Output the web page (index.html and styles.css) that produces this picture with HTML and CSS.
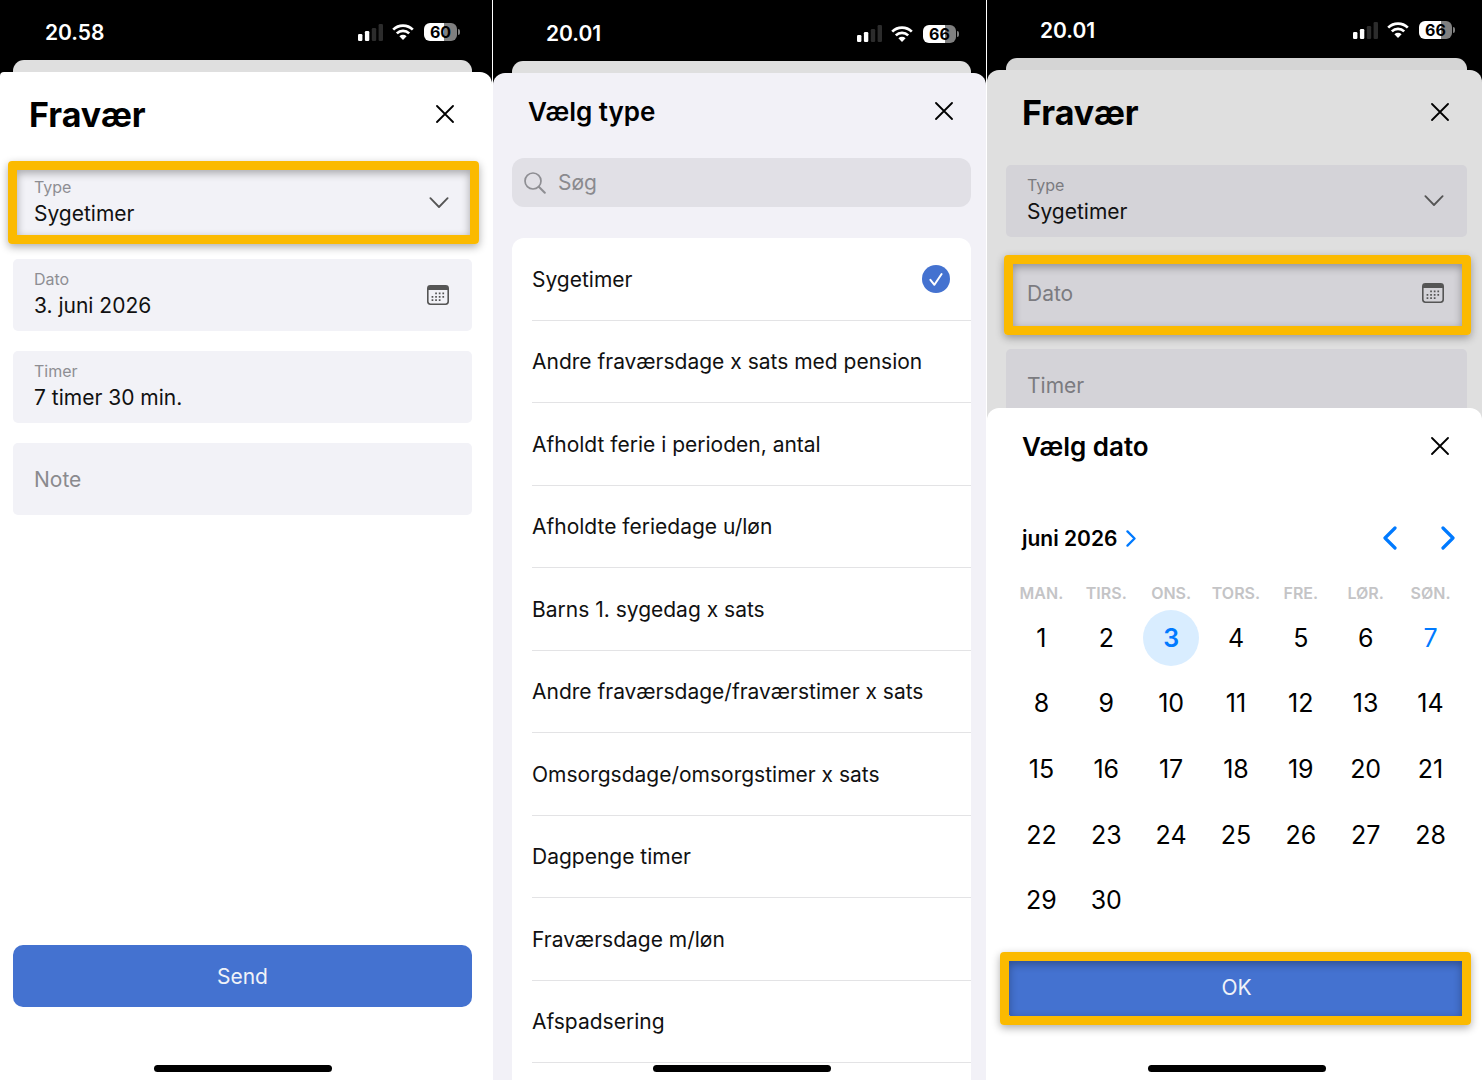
FILE: index.html
```
<!DOCTYPE html>
<html lang="da">
<head>
    <meta charset="UTF-8">
    <meta name="viewport" content="width=device-width, initial-scale=1.0">
    <title>Fravær</title>
    <link rel="stylesheet" href="styles.css">
</head>
<body>
    <!-- Shared icons -->
    <svg class="icon-defs" aria-hidden="true">
        <symbol id="signal" viewBox="0 0 25 17">
            <rect x="0" y="10" width="4.4" height="7" rx="1.2" fill="#fff"/>
            <rect x="6.9" y="7" width="4.4" height="10" rx="1.2" fill="#fff"/>
            <rect x="13.8" y="4" width="4.4" height="13" rx="1.2" fill="#2c2c2c"/>
            <rect x="20.6" y="0" width="4.4" height="17" rx="1.2" fill="#2c2c2c"/>
        </symbol>
        <symbol id="wifi" viewBox="0 0 22 16">
            <g fill="none" stroke="#fff" stroke-width="2.7">
                <path d="M1.2 5.6a14 14 0 0 1 19.6 0"/>
                <path d="M4.8 9.4a8.9 8.9 0 0 1 12.4 0"/>
            </g>
            <path d="M11 16l-3.6-3.7a5.2 5.2 0 0 1 7.2 0z" fill="#fff"/>
        </symbol>
        <symbol id="close" viewBox="0 0 18 18">
            <path d="M1 1l16 16M17 1L1 17" fill="none" stroke="#000" stroke-width="1.8" stroke-linecap="round"/>
        </symbol>
        <symbol id="chevron-down" viewBox="0 0 20 12">
            <path d="M1.4 1.2l8.6 8.8 8.6-8.8" fill="none" stroke="#555" stroke-width="1.8" stroke-linecap="round" stroke-linejoin="round"/>
        </symbol>
        <symbol id="chevron-right" viewBox="0 0 14 24">
            <path d="M2 2l10 10L2 22" fill="none" stroke="#007aff" stroke-width="3.2" stroke-linecap="round" stroke-linejoin="round"/>
        </symbol>
        <symbol id="chevron-left" viewBox="0 0 14 24">
            <path d="M12 2L2 12l10 10" fill="none" stroke="#007aff" stroke-width="3.2" stroke-linecap="round" stroke-linejoin="round"/>
        </symbol>
        <symbol id="calendar" viewBox="0 0 22 20">
            <rect x=".8" y=".8" width="20.4" height="18.4" rx="2.6" fill="none" stroke="#555" stroke-width="1.6"/>
            <path d="M1 5V3a2 2 0 0 1 2-2h16a2 2 0 0 1 2 2v2z" fill="#555"/>
            <g fill="none" stroke="#555" stroke-width="1.7" stroke-dasharray="1.7 1.9">
                <path d="M8.2 8.4h9"/>
                <path d="M4.6 11.8h12.6"/>
                <path d="M4.6 15.2h9"/>
            </g>
        </symbol>
        <symbol id="search" viewBox="0 0 22 22">
            <circle cx="9" cy="9" r="8" fill="none" stroke="#8e8e93" stroke-width="1.7"/>
            <path d="M14.8 14.8l6 6" stroke="#8e8e93" stroke-width="2" stroke-linecap="round"/>
        </symbol>
        <symbol id="check" viewBox="0 0 28 28">
            <circle cx="14" cy="14" r="14" fill="#4472d0"/>
            <path d="M8.4 14.8l4 5L19.6 9" fill="none" stroke="#fff" stroke-width="2" stroke-linecap="round" stroke-linejoin="round"/>
        </symbol>
    </svg>

    <main class="screens">
        <!-- Absence form -->
        <section class="phone phone-form">
            <div class="status-bar">
                <span class="time">20.58</span>
                <svg class="signal"><use href="#signal"/></svg>
                <svg class="wifi"><use href="#wifi"/></svg>
                <span class="battery battery-60">60</span>
            </div>
            <div class="sheet-behind"></div>
            <div class="sheet">
                <header class="sheet-header">
                    <h1>Fravær</h1>
                    <button class="close-btn" type="button" aria-label="Luk"><svg><use href="#close"/></svg></button>
                </header>
                <form class="form">
                    <div class="field">
                        <div class="field-body">
                            <label for="type">Type</label>
                            <select id="type"><option>Sygetimer</option></select>
                        </div>
                        <svg class="chevron"><use href="#chevron-down"/></svg>
                        <div class="highlight highlight-type"></div>
                    </div>
                    <div class="field">
                        <div class="field-body">
                            <label for="date">Dato</label>
                            <input id="date" type="text" value="3. juni 2026">
                        </div>
                        <svg class="calendar-icon"><use href="#calendar"/></svg>
                    </div>
                    <div class="field">
                        <div class="field-body">
                            <label for="hours">Timer</label>
                            <input id="hours" type="text" value="7 timer 30 min.">
                        </div>
                    </div>
                    <div class="field">
                        <input type="text" placeholder="Note" aria-label="Note">
                    </div>
                    <button class="primary-btn" type="button">Send</button>
                </form>
            </div>
            <div class="home-indicator"></div>
        </section>

        <!-- Type picker -->
        <section class="phone phone-types">
            <div class="status-bar">
                <span class="time">20.01</span>
                <svg class="signal"><use href="#signal"/></svg>
                <svg class="wifi"><use href="#wifi"/></svg>
                <span class="battery">66</span>
            </div>
            <div class="sheet-behind"></div>
            <div class="sheet">
                <header class="sheet-header small">
                    <h2>Vælg type</h2>
                    <button class="close-btn" type="button" aria-label="Luk"><svg><use href="#close"/></svg></button>
                </header>
                <div class="search">
                    <svg><use href="#search"/></svg>
                    <input type="search" placeholder="Søg" aria-label="Søg">
                </div>
                <ul class="type-list">
                    <li><label><input type="radio" name="absence" checked>Sygetimer<svg><use href="#check"/></svg></label></li>
                    <li><label><input type="radio" name="absence">Andre fraværsdage x sats med pension</label></li>
                    <li><label><input type="radio" name="absence">Afholdt ferie i perioden, antal</label></li>
                    <li><label><input type="radio" name="absence">Afholdte feriedage u/løn</label></li>
                    <li><label><input type="radio" name="absence">Barns 1. sygedag x sats</label></li>
                    <li><label><input type="radio" name="absence">Andre fraværsdage/fraværstimer x sats</label></li>
                    <li><label><input type="radio" name="absence">Omsorgsdage/omsorgstimer x sats</label></li>
                    <li><label><input type="radio" name="absence">Dagpenge timer</label></li>
                    <li><label><input type="radio" name="absence">Fraværsdage m/løn</label></li>
                    <li><label><input type="radio" name="absence">Afspadsering</label></li>
                </ul>
            </div>
            <div class="home-indicator"></div>
        </section>

        <!-- Date picker -->
        <section class="phone phone-date">
            <div class="status-bar">
                <span class="time">20.01</span>
                <svg class="signal"><use href="#signal"/></svg>
                <svg class="wifi"><use href="#wifi"/></svg>
                <span class="battery">66</span>
            </div>
            <div class="sheet-behind"></div>
            <div class="sheet">
                <header class="sheet-header">
                    <h1>Fravær</h1>
                    <button class="close-btn" type="button" aria-label="Luk"><svg><use href="#close"/></svg></button>
                </header>
                <form class="form">
                    <div class="field">
                        <div class="field-body">
                            <label for="type-2">Type</label>
                            <select id="type-2"><option>Sygetimer</option></select>
                        </div>
                        <svg class="chevron"><use href="#chevron-down"/></svg>
                    </div>
                    <div class="field">
                        <input type="text" placeholder="Dato" aria-label="Dato">
                        <svg class="calendar-icon"><use href="#calendar"/></svg>
                        <div class="highlight highlight-date"></div>
                    </div>
                    <div class="field">
                        <input type="text" placeholder="Timer" aria-label="Timer">
                    </div>
                </form>
            </div>

            <div class="date-modal">
                <header class="sheet-header small">
                    <h2>Vælg dato</h2>
                    <button class="close-btn" type="button" aria-label="Luk"><svg><use href="#close"/></svg></button>
                </header>
                <div class="month-row">
                    <button class="month-btn" type="button">juni 2026<svg><use href="#chevron-right"/></svg></button>
                    <button class="nav-btn" type="button" aria-label="Forrige måned"><svg><use href="#chevron-left"/></svg></button>
                    <button class="nav-btn" type="button" aria-label="Næste måned"><svg><use href="#chevron-right"/></svg></button>
                </div>
                <table class="calendar">
                    <thead>
                        <tr><th>MAN.</th><th>TIRS.</th><th>ONS.</th><th>TORS.</th><th>FRE.</th><th>LØR.</th><th>SØN.</th></tr>
                    </thead>
                    <tbody>
                        <tr>
                            <td><button type="button">1</button></td>
                            <td><button type="button">2</button></td>
                            <td><button type="button" class="selected">3</button></td>
                            <td><button type="button">4</button></td>
                            <td><button type="button">5</button></td>
                            <td><button type="button">6</button></td>
                            <td><button type="button" class="today">7</button></td>
                        </tr>
                        <tr>
                            <td><button type="button">8</button></td>
                            <td><button type="button">9</button></td>
                            <td><button type="button">10</button></td>
                            <td><button type="button">11</button></td>
                            <td><button type="button">12</button></td>
                            <td><button type="button">13</button></td>
                            <td><button type="button">14</button></td>
                        </tr>
                        <tr>
                            <td><button type="button">15</button></td>
                            <td><button type="button">16</button></td>
                            <td><button type="button">17</button></td>
                            <td><button type="button">18</button></td>
                            <td><button type="button">19</button></td>
                            <td><button type="button">20</button></td>
                            <td><button type="button">21</button></td>
                        </tr>
                        <tr>
                            <td><button type="button">22</button></td>
                            <td><button type="button">23</button></td>
                            <td><button type="button">24</button></td>
                            <td><button type="button">25</button></td>
                            <td><button type="button">26</button></td>
                            <td><button type="button">27</button></td>
                            <td><button type="button">28</button></td>
                        </tr>
                        <tr>
                            <td><button type="button">29</button></td>
                            <td><button type="button">30</button></td>
                            <td></td><td></td><td></td><td></td><td></td>
                        </tr>
                    </tbody>
                </table>
                <div class="confirm">
                    <button class="primary-btn" type="button">OK</button>
                    <div class="highlight highlight-ok"></div>
                </div>
            </div>
            <div class="home-indicator"></div>
        </section>
    </main>
</body>
</html>
```
FILE: styles.css
```
* {
    margin: 0;
    padding: 0;
    box-sizing: border-box;
}

body {
    font-family: Inter, "Liberation Sans", sans-serif;
    font-size: 21px;
    color: #111;
    background: #fff;
}

button,
input,
select {
    font: inherit;
    color: inherit;
    border: none;
    background: none;
    outline: none;
    appearance: none;
}

svg {
    display: block;
    flex: none;
}

.icon-defs {
    display: none;
}

.screens {
    display: grid;
    grid-template-columns: 492fr 493fr 495fr;
    gap: 1px;
    min-height: 100vh;
}

.phone {
    --left: 19px;
    --right: 15px;
    --time-inset: 34px;
    position: relative;
    display: flex;
    flex-direction: column;
    overflow: hidden;
    background: linear-gradient(#000 120px, #fff 120px);
}

.phone-form {
    --left: 13px;
    --right: 20px;
    --time-inset: 32px;
}

/* Status bar */
.status-bar {
    display: flex;
    align-items: center;
    height: 60px;
    padding: 4px calc(var(--right) + 15px) 0 calc(var(--left) + var(--time-inset));
    color: #fff;
}

.phone-types .status-bar {
    height: 61px;
    padding-top: 6px;
}

.phone-date .status-bar {
    height: 58px;
    padding-top: 2px;
}

.time {
    flex: 1;
    font-weight: 600;
}

.signal {
    width: 25px;
    height: 17px;
}

.wifi {
    width: 22px;
    height: 16px;
    margin: 0 10px 0 9px;
}

.battery {
    position: relative;
    width: 33px;
    height: 18px;
    border-radius: 6px;
    background: linear-gradient(90deg, #fff 66%, #808080 66%);
    color: #000;
    font-size: 16px;
    font-weight: 700;
    line-height: 18px;
    text-align: center;
}

.battery-60 {
    background: linear-gradient(90deg, #fff 60%, #808080 60%);
}

.battery::after {
    content: "";
    position: absolute;
    left: 34px;
    top: 6px;
    width: 2px;
    height: 6px;
    border-radius: 0 2px 2px 0;
    background: #808080;
}

/* Sheets */
.sheet-behind {
    height: 12px;
    margin: 0 var(--right) 0 var(--left);
    border-radius: 11px 11px 0 0;
    background: #dfdfdf;
}

.sheet {
    flex: 1;
    display: flex;
    flex-direction: column;
    padding: 0 var(--right) 0 var(--left);
    border-radius: 12px 12px 0 0;
    background: #fff;
}

.phone-form .sheet {
    border-radius: 4px 12px 0 0;
}

.phone-types .sheet {
    background: #f2f1f7;
}

.phone-date .sheet {
    background: #dfdfdf;
}

.phone-date .sheet-behind {
    background: #d5d5d5;
}

.sheet-header {
    display: flex;
    align-items: center;
    justify-content: space-between;
    height: 84px;
    padding: 0 18px 0 16px;
    color: #000;
}

.sheet-header.small {
    height: 76px;
}

h1 {
    font-size: 34px;
    font-weight: 700;
}

h2 {
    font-size: 26px;
    font-weight: 600;
}

.close-btn svg {
    width: 18px;
    height: 18px;
}

/* Form fields */
.form {
    flex: 1;
    display: flex;
    flex-direction: column;
    gap: 20px;
    padding: 11px 0 73px;
}

.field {
    position: relative;
    display: flex;
    align-items: center;
    height: 72px;
    padding: 0 23px 0 21px;
    border-radius: 5px;
    background: #f2f2f7;
}

.phone-date .field {
    background: #d4d3d8;
}

.field-body {
    flex: 1;
    display: flex;
    flex-direction: column;
}

.field label {
    color: #8e8e93;
    font-size: 16px;
    line-height: 20px;
}

.field input,
.field select {
    flex: 1;
    width: 100%;
    min-width: 0;
    height: 32px;
}

.field-body input,
.field-body select {
    flex: none;
}

input::placeholder {
    color: #8a8a8e;
    opacity: 1;
}

.phone-date .field label,
.phone-date input::placeholder {
    color: #7b7b80;
}

.chevron {
    width: 20px;
    height: 12px;
}

.calendar-icon {
    width: 22px;
    height: 20px;
}

.primary-btn {
    width: 100%;
    height: 62px;
    border-radius: 10px;
    background: #4472d0;
    color: #f0f2f8;
}

.form .primary-btn {
    margin-top: auto;
}

/* Yellow frames over the marked controls */
.highlight {
    position: absolute;
    border: 9px solid #fbba00;
    border-radius: 4px;
    box-shadow: 0 3px 8px rgba(0, 0, 0, 0.32), inset 0 3px 8px rgba(0, 0, 0, 0.32);
    pointer-events: none;
}

.highlight-type {
    inset: -6px -7px -5px -5px;
}

.highlight-date {
    inset: -2px -4px -6px -2px;
}

.highlight-ok {
    inset: -4px -4px -7px -6px;
}

/* Type picker */
.search {
    display: flex;
    align-items: center;
    gap: 12px;
    height: 49px;
    margin: 9px 0 31px;
    padding: 0 12px;
    border-radius: 12px;
    background: #e1e0e6;
}

.search svg {
    width: 22px;
    height: 22px;
}

.search input {
    flex: 1;
    min-width: 0;
}

.type-list {
    flex: 1;
    display: flex;
    flex-direction: column;
    padding: 0 0 17px 20px;
    border-radius: 12px 12px 0 0;
    background: #fff;
    list-style: none;
}

.type-list li {
    flex: 1;
    display: flex;
    min-height: 60px;
    border-bottom: 1px solid #e3e3e5;
}

.type-list label {
    flex: 1;
    display: flex;
    align-items: center;
    padding: 1px 21px 0 0;
}

.type-list svg {
    width: 28px;
    height: 28px;
    margin-left: auto;
}

/* Date picker */
.date-modal {
    position: absolute;
    left: 0;
    right: 0;
    bottom: 0;
    padding: 0 var(--right) 62px var(--left);
    border-radius: 12px 12px 0 0;
    background: #fff;
}

.month-row {
    display: flex;
    align-items: center;
    gap: 44px;
    height: 44px;
    margin: 32px 0 21px;
    padding: 0 12px 0 16px;
}

.month-btn {
    display: flex;
    align-items: center;
    gap: 9px;
    margin-right: auto;
    color: #000;
    font-weight: 600;
}

.month-btn svg {
    width: 10px;
    height: 17px;
}

.nav-btn svg {
    width: 14px;
    height: 24px;
}

.calendar {
    width: 100%;
    height: 352px;
    margin-bottom: 23px;
    padding: 0 4px 0 3px;
    table-layout: fixed;
    border-spacing: 0;
}

.calendar th {
    height: 24px;
    color: #c4c4c6;
    font-size: 16px;
    font-weight: 600;
    text-align: center;
}

.calendar td {
    text-align: center;
    vertical-align: middle;
}

.calendar td button {
    display: block;
    width: 56px;
    height: 56px;
    margin: 0 auto;
    border-radius: 50%;
    color: #000;
    font-size: 25px;
}

.calendar .selected {
    background: #d9edff;
    color: #007aff;
    font-weight: 600;
}

.calendar .today {
    color: #007aff;
}

.confirm {
    position: relative;
}

.home-indicator {
    position: absolute;
    bottom: 8px;
    left: calc(50% + var(--left) / 2 - var(--right) / 2 - 89px);
    width: 178px;
    height: 7px;
    border-radius: 4px;
    background: #000;
}
```
